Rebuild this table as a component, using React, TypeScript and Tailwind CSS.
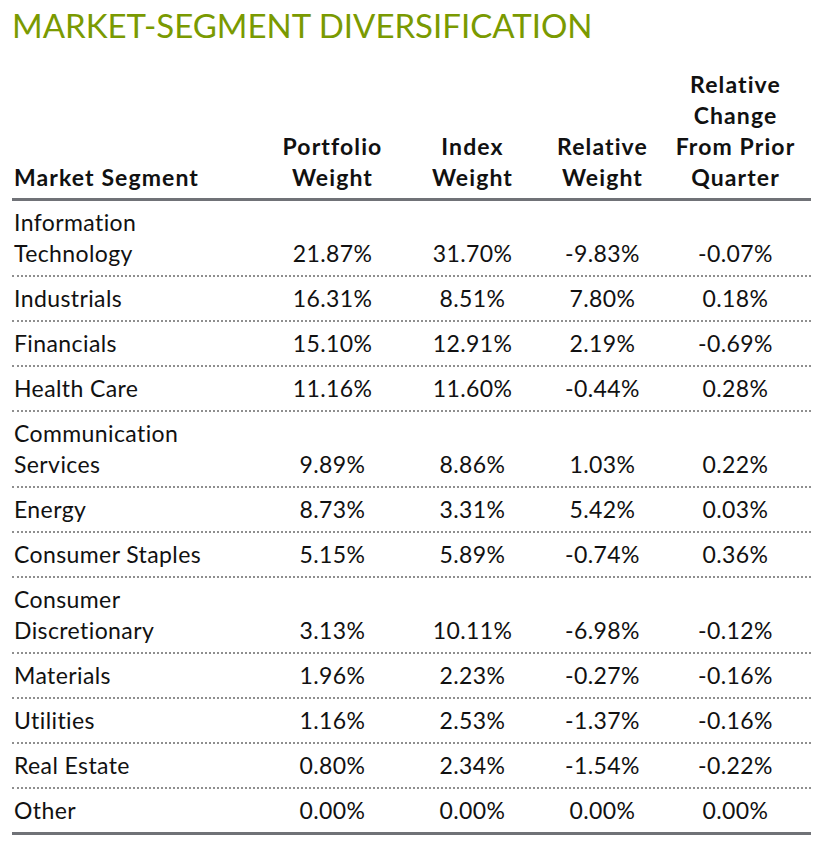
const rows: [string, string, string, string, string][] = [
  ['Information\nTechnology', '21.87%', '31.70%', '-9.83%', '-0.07%'],
  ['Industrials', '16.31%', '8.51%', '7.80%', '0.18%'],
  ['Financials', '15.10%', '12.91%', '2.19%', '-0.69%'],
  ['Health Care', '11.16%', '11.60%', '-0.44%', '0.28%'],
  ['Communication\nServices', '9.89%', '8.86%', '1.03%', '0.22%'],
  ['Energy', '8.73%', '3.31%', '5.42%', '0.03%'],
  ['Consumer Staples', '5.15%', '5.89%', '-0.74%', '0.36%'],
  ['Consumer\nDiscretionary', '3.13%', '10.11%', '-6.98%', '-0.12%'],
  ['Materials', '1.96%', '2.23%', '-0.27%', '-0.16%'],
  ['Utilities', '1.16%', '2.53%', '-1.37%', '-0.16%'],
  ['Real Estate', '0.80%', '2.34%', '-1.54%', '-0.22%'],
  ['Other', '0.00%', '0.00%', '0.00%', '0.00%'],
];

const cols = 'grid grid-cols-[253px_135px_145px_115px_151px]';

export default function App() {
  return (
    <div className="bg-white w-[833px] h-[850px] px-3 pt-[6px] font-['Lato',sans-serif] text-[#111]">
      <h1 className="text-[33px] leading-[38px] font-normal text-[#7a9a01] tracking-[0px]">
        MARKET-SEGMENT DIVERSIFICATION
      </h1>
      <div className="mt-[25px] w-[799px]">
        <div className={`${cols} items-end text-[23px] leading-[31px] font-bold tracking-[1.1px] text-center border-b-[3px] border-[#707277] pb-[5px]`}>
          <div className="text-left pl-[2px]">Market Segment</div>
          <div>Portfolio<br />Weight</div>
          <div>Index<br />Weight</div>
          <div>Relative<br />Weight</div>
          <div>Relative<br />Change<br />From Prior<br />Quarter</div>
        </div>
        {rows.map((r, i) => (
          <div
            key={r[0]}
            className={`${cols} items-end text-[23px] leading-[31px] tracking-[0.4px] text-center py-[6px] ${
              i === rows.length - 1
                ? 'border-b-[3px] border-solid border-[#707277]'
                : 'border-b-2 border-dotted border-[#8f8f8f]'
            }`}
          >
            <div className="text-left pl-[2px] whitespace-pre-line">{r[0]}</div>
            <div>{r[1]}</div>
            <div>{r[2]}</div>
            <div>{r[3]}</div>
            <div>{r[4]}</div>
          </div>
        ))}
      </div>
    </div>
  );
}
